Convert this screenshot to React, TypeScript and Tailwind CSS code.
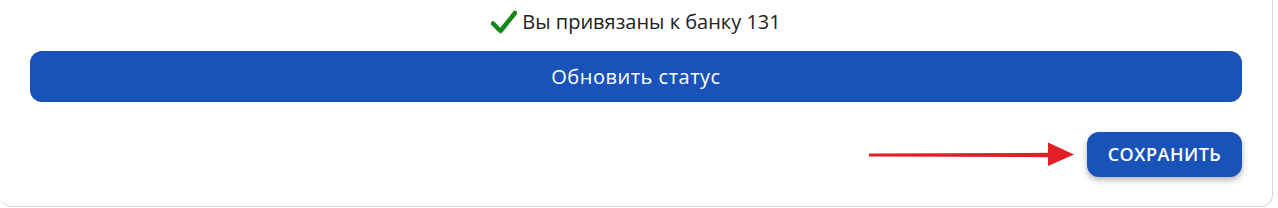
import React from 'react';

const Check = () => (
  <svg width="26" height="24" viewBox="0 0 26 24" className="shrink-0">
    <path d="M2 13.5 L9.5 21 L24 3" fill="none" stroke="#14861c" strokeWidth="4.5" strokeLinecap="round" strokeLinejoin="round" />
  </svg>
);

const Arrow = () => (
  <svg width="206" height="26" viewBox="0 0 206 26" className="shrink-0">
    <path d="M0 11.4 L181 10.8 L181 15.2 L0 14.6 Z" fill="#e31e24" />
    <path d="M179 0.5 L205 12.5 L179 24 Z" fill="#e31e24" />
  </svg>
);

export default function App() {
  return (
    <div className="w-[1278px] h-[208px] bg-white" style={{ fontFamily: '"Open Sans", "Noto Sans", sans-serif' }}>
      <div className="w-[1273px] h-[207px] border-r border-b border-[#d9d9d9] rounded-br-[12px] rounded-bl-[12px] flex flex-col px-[30px]">
        <div className="flex items-center justify-center gap-[5px] h-[42px] pt-[1px]">
          <Check />
          <span className="text-[20px] text-[#222]">Вы привязаны к банку 131</span>
        </div>
        <button className="mt-[9px] h-[51px] w-full rounded-[12px] bg-[#1953b9] text-white text-[20px] tracking-[0.5px]">
          Обновить статус
        </button>
        <div className="mt-[30px] flex items-center justify-end">
          <Arrow />
          <button className="ml-[12px] w-[155px] h-[45px] rounded-[12px] bg-[#1953b9] text-white text-[18px] font-semibold tracking-[0.5px] shadow-[0_3px_6px_rgba(0,0,0,0.3)]">
            СОХРАНИТЬ
          </button>
        </div>
      </div>
    </div>
  );
}
